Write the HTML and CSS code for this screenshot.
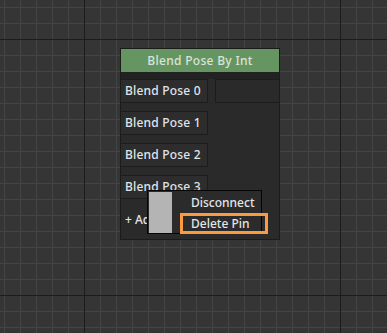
FILE: index.html
```html
<!DOCTYPE html>
<html lang="en">
<head>
  <meta charset="UTF-8" />
  <title>Blend Pose By Int</title>
  <link rel="stylesheet" href="styles.css">
</head>
<body>
  <div class="graph">
    <!-- Node -->
    <div class="node">
      <div class="node-title">Blend Pose By Int</div>
      <div class="node-body">
        <div class="pin-row">
          <div class="pin">Blend Pose 0</div>
          <div class="out-pin"></div>
        </div>
        <div class="pin-row"><div class="pin">Blend Pose 1</div></div>
        <div class="pin-row"><div class="pin">Blend Pose 2</div></div>
        <div class="pin-row"><div class="pin">Blend Pose 3</div></div>
        <div class="add-pin">+ Add Pin</div>
      </div>
    </div>

    <!-- Context menu -->
    <div class="ctx-menu">
      <div class="swatch"></div>
      <div class="menu-items">
        <div class="menu-item">Disconnect</div>
        <div class="menu-item selected">Delete Pin</div>
      </div>
    </div>
  </div>
</body>
</html>
```

FILE: styles.css
```css
* {
  box-sizing: border-box;
  margin: 0;
  padding: 0;
}

html, body {
  height: 100%;
  font-family: 'Noto Sans', 'Open Sans', sans-serif;
}

body {
  background-color: #353535;
  background-image:
    linear-gradient(to right, #1c1c1c 1px, transparent 1px),
    linear-gradient(to bottom, #1c1c1c 1px, transparent 1px),
    linear-gradient(to right, #444 1px, transparent 1px),
    linear-gradient(to bottom, #444 1px, transparent 1px);
  background-size: 256px 256px, 256px 256px, 16px 16px, 16px 16px;
  background-position: 84px 39px, 84px 39px, 4px 7px, 4px 7px;
  overflow: hidden;
}

.graph {
  position: relative;
  width: 100%;
  height: 100%;
}

.node {
  position: absolute;
  left: 120px;
  top: 48px;
  width: 160px;
  height: 192px;
  background: #2a2a2a;
  border: 1px solid #1b1b1b;
  display: flex;
  flex-direction: column;
}

.node-title {
  height: 23px;
  background: #659662;
  color: #dae2da;
  font-size: 12px;
  font-weight: 500;
  letter-spacing: 0.3px;
  text-align: center;
  line-height: 23px;
}

.node-body {
  flex: 1;
  background: #2a2a2a;
  border-top: 7px solid #222;
  display: flex;
  flex-direction: column;
  gap: 8px;
}

.pin-row {
  display: flex;
  justify-content: space-between;
  height: 24px;
}

.pin {
  width: 88px;
  margin-left: -1px;
  height: 24px;
  background: #2d2d2d;
  border: 1px solid #1c1c1c;
  color: #e0e5ea;
  font-size: 12px;
  font-weight: 500;
  letter-spacing: 0.2px;
  line-height: 22px;
  padding-left: 4px;
  white-space: nowrap;
}

.out-pin {
  width: 65px;
  margin-right: -1px;
  height: 24px;
  background: #2a2a2a;
  border: 1px solid #1c1c1c;
}

.add-pin {
  color: #e0e5ea;
  font-size: 12px;
  font-weight: 500;
  padding: 4px 0 0 4px;
}

.ctx-menu {
  position: absolute;
  left: 147px;
  top: 190px;
  width: 115px;
  height: 44px;
  background: #2b2b2b;
  border: 1px solid #050505;
  display: flex;
  gap: 8px;
  padding: 1px 0 0 1px;
}

.swatch {
  flex-shrink: 0;
  width: 23px;
  height: 41px;
  background: #b4b4b4;
}

.menu-items {
  width: 88px;
  flex-shrink: 0;
  display: flex;
  flex-direction: column;
}

.menu-item {
  height: 21px;
  border: 3px solid transparent;
  padding-left: 8px;
  color: #e2e6ea;
  font-size: 12px;
  font-weight: 500;
  line-height: 15px;
  white-space: nowrap;
}

.menu-item.selected {
  border-color: #fb9a42;
}
```
